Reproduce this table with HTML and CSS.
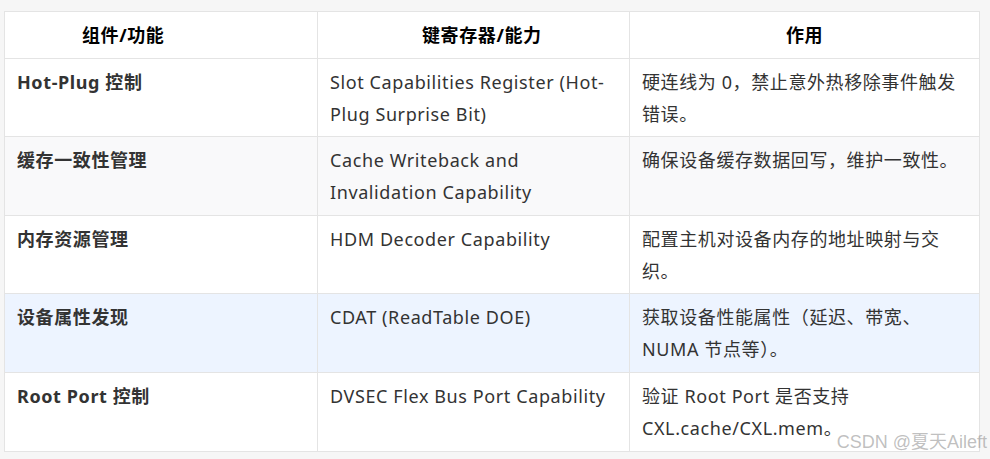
FILE: index.html
```html
<!DOCTYPE html>
<html lang="zh-CN">
<head>
<meta charset="utf-8">
<link rel="stylesheet" href="styles.css">
</head>
<body>
<div class="page">
  <table class="grid">
    <colgroup>
      <col class="c1"><col class="c2"><col class="c3">
    </colgroup>
    <thead>
      <tr><th class="h1">组件/功能</th><th class="h2">键寄存器/能力</th><th class="h3">作用</th></tr>
    </thead>
    <tbody>
      <tr>
        <td class="name">Hot-Plug 控制</td>
        <td>Slot Capabilities Register (Hot-Plug Surprise Bit)</td>
        <td>硬连线为 0，禁止意外热移除事件触发错误。</td>
      </tr>
      <tr class="alt">
        <td class="name">缓存一致性管理</td>
        <td>Cache Writeback and Invalidation Capability</td>
        <td>确保设备缓存数据回写，维护一致性。</td>
      </tr>
      <tr>
        <td class="name">内存资源管理</td>
        <td>HDM Decoder Capability</td>
        <td>配置主机对设备内存的地址映射与交织。</td>
      </tr>
      <tr class="hl">
        <td class="name">设备属性发现</td>
        <td>CDAT (ReadTable DOE)</td>
        <td>获取设备性能属性（延迟、带宽、NUMA 节点等）。</td>
      </tr>
      <tr>
        <td class="name">Root Port 控制</td>
        <td>DVSEC Flex Bus Port Capability</td>
        <td>验证 Root Port 是否支持 CXL.cache/CXL.mem。</td>
      </tr>
    </tbody>
  </table>
  <div class="mark">CSDN @夏天Aileft</div>
</div>
</body>
</html>
```
FILE: styles.css
```css
html, body {
  margin: 0;
  padding: 0;
  background: #f6f6f6;
}
.page {
  position: relative;
  width: 990px;
  height: 459px;
  padding: 11px 0 0 4px;
  box-sizing: border-box;
  font-family: "Noto Sans", "Noto Sans CJK SC", sans-serif;
}
.grid {
  border-collapse: collapse;
  table-layout: fixed;
  width: 975px;
  background: #fff;
  font-size: 18px;
  letter-spacing: 0.6px;
  line-height: 32px;
  color: #333;
}
.c1 { width: 313px; }
.c2 { width: 312px; }
.c3 { width: 350px; }
.grid th, .grid td {
  border: 1px solid #e4e4e4;
  padding: 7px 12px 6.6px;
  vertical-align: top;
  text-align: left;
}
.grid th {
  color: #000;
  font-weight: bold;
}
.grid th.h1 { padding-left: 77px; }
.grid th.h2 { padding-left: 104px; }
.grid th.h3 { text-align: center; }
.grid td.name {
  font-weight: bold;
}
.grid tr.alt td {
  background: #f9f9fa;
}
.grid tr.hl td {
  background: #edf4ff;
}
.mark {
  position: absolute;
  right: 3px;
  bottom: 6px;
  font-size: 18px;
  color: rgba(150,150,150,0.6);
  font-family: "Liberation Sans", "Noto Sans CJK SC", sans-serif;
}
```
